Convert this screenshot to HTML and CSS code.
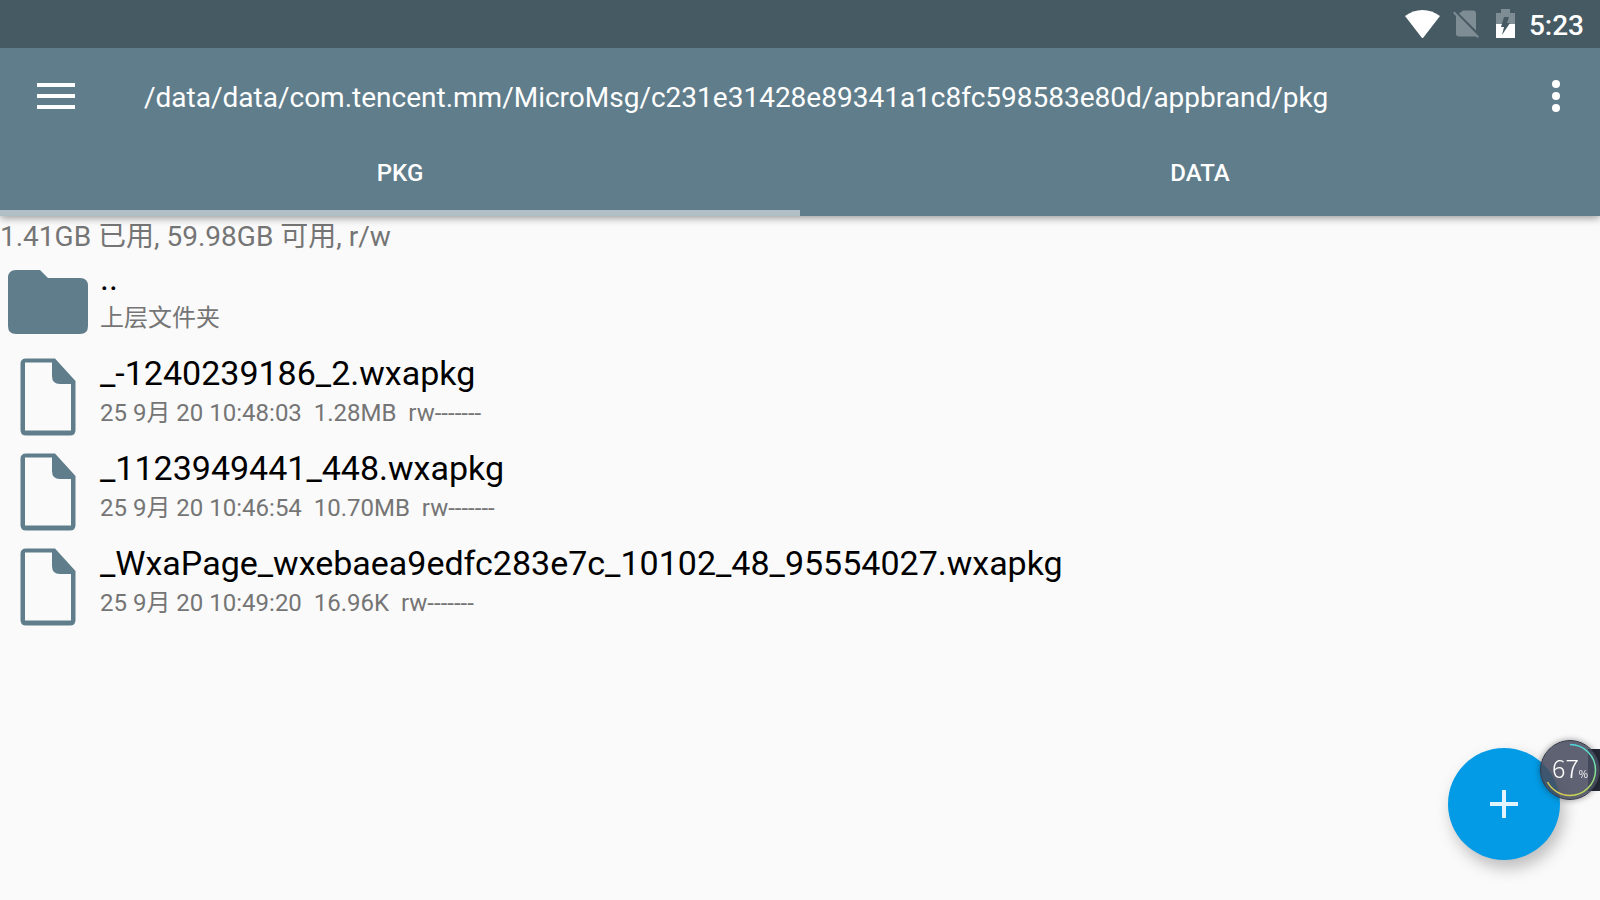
FILE: index.html
```html
<!DOCTYPE html>
<html lang="zh-CN">
<head>
<meta charset="utf-8">
<meta name="viewport" content="width=device-width, initial-scale=1">
<title>pkg</title>
<link rel="stylesheet" href="styles.css">
</head>
<body>
<svg class="defs" aria-hidden="true">
  <symbol id="file" viewBox="0 0 96 96">
    <path fill="#607d8b" fill-rule="evenodd" d="M26 9.500H55L75.500 32V81Q75.500 86.500 70 86.500H26Q20.500 86.500 20.500 81V15Q20.500 9.500 26 9.500ZM25 13.500V81.500H71V35H60Q52 35 52 27V13.500Z"/>
  </symbol>
</svg>
<div class="statusbar">
  <svg class="wifi" viewBox="0 0 35 28" aria-label="Wi-Fi"><path fill="#fff" d="M0 6Q8 0 17.500 0T35 6L18 28H17Z"/></svg>
  <svg class="sim" viewBox="0 0 28 30" aria-label="无 SIM 卡"><path fill="#7e8c93" d="M11 1.500H21Q24 1.500 24 4.500V21.500L7 4.500ZM1 4L2.500 2.500L27 27.500L25.500 29L24 27.500H7Q4 27.500 4 24.500V7Z"/></svg>
  <svg class="battery" viewBox="0 0 20 30" aria-label="正在充电"><path fill="#7e8c93" d="M5 0H14V4H19V15H0V4H5Z"/><path fill="#fff" d="M0 15H19V29H0Z"/><path fill="#465a64" d="M8 8H13L11 14H14L6 26L8 18H5Z"/></svg>
  <time class="clock">5:23</time>
</div>
<header class="appbar">
  <div class="toolbar">
    <button class="icon-btn menu" aria-label="菜单"><svg viewBox="0 0 38 26"><path fill="#fff" d="M0 0H38V4H0ZM0 11H38V15H0ZM0 22H38V26H0Z"/></svg></button>
    <h1 class="path">/data/data/com.tencent.mm/MicroMsg/c231e31428e89341a1c8fc598583e80d/appbrand/pkg</h1>
    <button class="icon-btn more" aria-label="更多选项"><svg viewBox="0 0 8 32"><g fill="#fff"><circle cx="4" cy="4" r="4"/><circle cx="4" cy="16" r="4"/><circle cx="4" cy="28" r="4"/></g></svg></button>
  </div>
  <div class="tabs" role="tablist">
    <button class="tab active" role="tab" aria-selected="true">PKG</button>
    <button class="tab" role="tab" aria-selected="false">DATA</button>
  </div>
</header>
<main>
  <p class="storage">1.41GB 已用, 59.98GB 可用, r/w</p>
  <ul class="files">
    <li><button class="row"><svg class="thumb" viewBox="0 0 96 96" aria-hidden="true"><path fill="#607d8b" d="M16 16H40L48 24H80Q88 24 88 32V72Q88 80 80 80H16Q8 80 8 72V24Q8 16 16 16Z"/></svg><span class="label"><span class="name">..</span><span class="meta">上层文件夹</span></span></button></li>
    <li><button class="row"><svg class="thumb" aria-hidden="true"><use href="#file"/></svg><span class="label"><span class="name">_-1240239186_2.wxapkg</span><span class="meta">25 9月 20 10:48:03&nbsp; 1.28MB&nbsp; rw-------</span></span></button></li>
    <li><button class="row"><svg class="thumb" aria-hidden="true"><use href="#file"/></svg><span class="label"><span class="name">_1123949441_448.wxapkg</span><span class="meta">25 9月 20 10:46:54&nbsp; 10.70MB&nbsp; rw-------</span></span></button></li>
    <li><button class="row"><svg class="thumb" aria-hidden="true"><use href="#file"/></svg><span class="label"><span class="name">_WxaPage_wxebaea9edfc283e7c_10102_48_95554027.wxapkg</span><span class="meta">25 9月 20 10:49:20&nbsp; 16.96K&nbsp; rw-------</span></span></button></li>
  </ul>
</main>
<button class="fab" aria-label="新建"><svg viewBox="0 0 28 28"><path fill="#e1f3fd" d="M12 0H16V12H28V16H16V28H12V16H0V12H12Z"/></svg></button>
<div class="dock"></div>
<div class="gauge">
  <svg viewBox="0 0 60 60" aria-hidden="true">
    <defs><linearGradient id="arc" x1="0" y1="0" x2="0" y2="1"><stop offset="0" stop-color="#4fd8dc"/><stop offset=".5" stop-color="#7ce0a0"/><stop offset="1" stop-color="#c9d84e"/></linearGradient></defs>
    <path fill="none" stroke="url(#arc)" stroke-width="1.500" d="M30 4.500A25.500 25.500 0 0 1 30 55.500"/>
    <path fill="none" stroke="#d9cf52" stroke-width="1.500" d="M30 55.500A25.500 25.500 0 0 1 7.500 42"/>
  </svg>
  <span class="value">67<small>%</small></span>
</div>
</body>
</html>
```

FILE: styles.css
```css
* { box-sizing: border-box; }
body {
  margin: 0;
  min-height: 100vh;
  background: #fafafa;
  color: #000;
  font-family: Roboto, "Noto Sans CJK SC", sans-serif;
}
button {
  border: 0;
  padding: 0;
  background: none;
  color: inherit;
  font: inherit;
  cursor: pointer;
}
svg { display: block; flex: none; }
.defs { position: absolute; width: 0; height: 0; }

.statusbar {
  display: flex;
  justify-content: flex-end;
  align-items: center;
  height: 48px;
  padding-right: 16px;
  background: #465a64;
  color: #fff;
}
.wifi { width: 35px; height: 28px; margin-right: 12px; }
.sim { width: 28px; height: 30px; margin-right: 16px; }
.battery { width: 20px; height: 30px; margin-right: 13px; }
.clock { font-size: 28px; font-weight: 500; line-height: 32px; padding-top: 4px; }

.appbar {
  position: relative;
  background: #607d8b;
  color: #fff;
  box-shadow: 0 2px 8px rgba(0, 0, 0, .4);
  clip-path: inset(0 0 -16px 0);
}
.toolbar { display: flex; align-items: center; height: 96px; }
.icon-btn { display: flex; justify-content: center; align-items: center; height: 96px; }
.menu { width: 112px; }
.menu svg { width: 38px; height: 26px; }
.more { width: 88px; }
.more svg { width: 8px; height: 32px; }
.path {
  flex: 1;
  min-width: 0;
  margin: 0;
  padding: 4px 0 0 32px;
  font-size: 28px;
  font-weight: 400;
  line-height: 36px;
  white-space: nowrap;
  overflow: hidden;
  text-overflow: ellipsis;
}
.tabs { display: grid; grid-template-columns: 1fr 1fr; }
.tab {
  height: 72px;
  padding-bottom: 8px;
  border-bottom: 6px solid transparent;
  font-size: 24px;
  font-weight: 500;
  line-height: 28px;
}
.tab.active { border-bottom-color: #b0bec5; }

.storage {
  margin: 0;
  padding-top: 4px;
  color: #757575;
  font-size: 28px;
  line-height: 34px;
}
.files { margin: 0; padding: 0; list-style: none; }
.row {
  display: flex;
  align-items: center;
  width: 100%;
  height: 95px;
  text-align: left;
}
.thumb { width: 96px; height: 96px; }
.label {
  display: flex;
  flex-direction: column;
  gap: 2px;
  padding: 0 0 10px 4px;
}
.name { font-size: 34px; line-height: 40px; }
.meta { color: #757575; font-size: 24px; line-height: 36px; }

.fab {
  position: fixed;
  right: 40px;
  bottom: 40px;
  display: flex;
  justify-content: center;
  align-items: center;
  width: 112px;
  height: 112px;
  border-radius: 50%;
  background: #039be5;
  box-shadow: 4px 8px 16px rgba(0, 0, 0, .25);
}
.fab svg { width: 28px; height: 28px; }
.dock {
  position: fixed;
  right: 0;
  bottom: 109px;
  width: 12px;
  height: 42px;
  background: #262a38;
}
.gauge {
  position: fixed;
  right: 0;
  bottom: 100px;
  display: flex;
  justify-content: center;
  align-items: center;
  width: 60px;
  height: 60px;
  border: 1px solid #363947;
  border-radius: 50%;
  background: rgba(72, 76, 94, .88);
  box-shadow: 0 0 6px rgba(0, 0, 0, .4);
  color: #fff;
}
.gauge svg { position: absolute; width: 60px; height: 60px; }
.value { font-family: "Noto Sans CJK SC", sans-serif; font-size: 25px; font-weight: 300; line-height: 28px; }
.value small { font-size: 10px; font-weight: 400; }
```
